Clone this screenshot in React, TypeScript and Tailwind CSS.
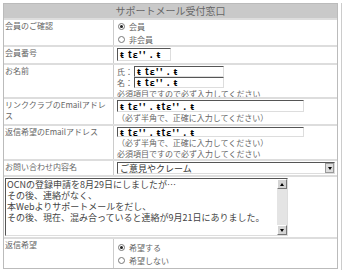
import React from 'react';

const font = { fontFamily: '"Noto Sans CJK JP", "Noto Sans", sans-serif' };

const Radio = ({ checked, label }: { checked?: boolean; label: string }) => (
  <div className="flex items-center gap-[4px] h-[13px]">
    <span className="w-[7px] h-[7px] rounded-full border border-[#777] flex items-center justify-center bg-white">
      {checked && <span className="w-[3px] h-[3px] rounded-full bg-[#222]" />}
    </span>
    <span>{label}</span>
  </div>
);

const Masked = ({ long }: { long?: boolean }) => (
  <span className="font-bold text-black text-[9px] tracking-[1px] leading-none">
    {long ? "ŧ tɛ'' . ŧtɛ'' . ŧ" : "ŧ tɛ'' . ŧ"}
  </span>
);

const TextBox = ({ w, h, long }: { w: string; h: string; long?: boolean }) => (
  <div className={`${w} ${h} border border-t-[#555] border-l-[#555] border-r-[#ddd] border-b-[#ddd] bg-white flex items-center px-[2px] overflow-hidden`}>
    <Masked long={long} />
  </div>
);

const Label = ({ children }: { children: React.ReactNode }) => (
  <div className="w-[110px] shrink-0 border-r border-[#ccc] px-[1px]">{children}</div>
);

export default function App() {
  return (
    <div className="w-[351px] h-[270px] bg-white flex pl-[3px] pt-[3px] text-[8px] leading-[11px] text-[#666]" style={font}>
      <div className="w-[335px] h-[266px] border border-[#bbb] flex flex-col">
        <div className="h-[14px] bg-[#c9c9c9] text-[10px] leading-[14px] text-[#666] text-center shrink-0">
          サポートメール受付窓口
        </div>

        <div className="flex h-[27px] border-t-2 border-[#ddd]">
          <Label>会員のご確認</Label>
          <div className="pl-[4px]">
            <Radio checked label="会員" />
            <Radio label="非会員" />
          </div>
        </div>

        <div className="flex h-[18px] border-t-2 border-[#ddd]">
          <Label>会員番号</Label>
          <div className="pl-[3px] pt-[1px]">
            <TextBox w="w-[54px]" h="h-[13px]" />
          </div>
        </div>

        <div className="flex h-[34px] border-t-2 border-[#ddd]">
          <Label>お名前</Label>
          <div className="pl-[3px] pt-[1px] flex flex-col">
            <div className="flex items-center gap-[1px]">
              <span>氏：</span>
              <TextBox w="w-[90px]" h="h-[11px]" />
            </div>
            <div className="flex items-center gap-[1px]">
              <span>名：</span>
              <TextBox w="w-[90px]" h="h-[11px]" />
            </div>
            <div>必須項目ですので必ず入力してください</div>
          </div>
        </div>

        <div className="flex h-[27px] border-t-2 border-[#ddd]">
          <Label>リンククラブのEmailアドレス</Label>
          <div className="pl-[3px] pt-[1px] flex flex-col">
            <TextBox w="w-[187px]" h="h-[12px]" long />
            <div>（必ず半角で、正確に入力してください）</div>
          </div>
        </div>

        <div className="flex h-[35px] border-t-2 border-[#ddd]">
          <Label>返信希望のEmailアドレス</Label>
          <div className="pl-[3px] pt-[1px] flex flex-col">
            <TextBox w="w-[187px]" h="h-[12px]" long />
            <div>（必ず半角で、正確に入力してください）</div>
            <div>必須項目ですので必ず入力してください</div>
          </div>
        </div>

        <div className="flex h-[16px] border-t-2 border-[#ddd]">
          <Label>お問い合わせ内容名</Label>
          <div className="pl-[3px] pt-[1px]">
            <div className="w-[218px] h-[12px] border border-t-[#555] border-l-[#555] border-r-[#ddd] border-b-[#ddd] flex items-center bg-white">
              <span className="flex-1 pl-[2px] text-[9px] text-[#333]">ご意見やクレーム</span>
              <span className="w-[9px] h-[10px] bg-[#ddd] border border-[#999] flex items-center justify-center">
                <span className="w-0 h-0 border-l-[2px] border-r-[2px] border-t-[3px] border-l-transparent border-r-transparent border-t-black" />
              </span>
            </div>
          </div>
        </div>

        <div className="h-[62px] border-t-2 border-[#ddd] pl-[1px] pt-[1px]">
          <div className="w-[283px] h-[58px] border border-t-[#555] border-l-[#555] border-r-[#ddd] border-b-[#ddd] bg-white flex">
            <div className="flex-1 pl-[1px] text-[9px] text-[#444] flex flex-col">
              <div className="h-[11px] leading-[11px]">OCNの登録申請を8月29日にしましたが…</div>
              <div className="h-[11px] leading-[11px]">その後、連絡がなく、</div>
              <div className="h-[11px] leading-[11px]">本Webよりサポートメールをだし、</div>
              <div className="h-[11px] leading-[11px]">その後、現在、混み合っていると連絡が9月21日にありました。</div>
            </div>
            <div className="w-[10px] bg-[#e4e4e4] flex flex-col justify-between">
              <span className="h-[10px] bg-[#d4d4d4] border border-t-white border-l-white border-r-[#777] border-b-[#777] flex items-center justify-center">
                <span className="w-0 h-0 border-l-[2px] border-r-[2px] border-b-[3px] border-l-transparent border-r-transparent border-b-black" />
              </span>
              <span className="h-[10px] bg-[#d4d4d4] border border-t-white border-l-white border-r-[#777] border-b-[#777] flex items-center justify-center">
                <span className="w-0 h-0 border-l-[2px] border-r-[2px] border-t-[3px] border-l-transparent border-r-transparent border-t-black" />
              </span>
            </div>
          </div>
        </div>

        <div className="flex flex-1 border-t-2 border-[#ddd]">
          <Label>返信希望</Label>
          <div className="pl-[4px] pt-[2px]">
            <Radio checked label="希望する" />
            <Radio label="希望しない" />
          </div>
        </div>
      </div>
      <div className="ml-[3px] w-[1px] h-[267px] bg-[#ccc]" />
    </div>
  );
}
